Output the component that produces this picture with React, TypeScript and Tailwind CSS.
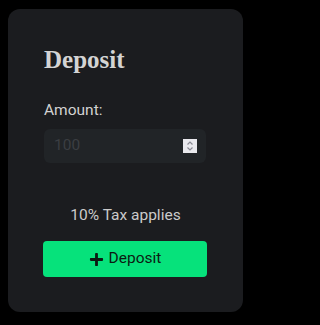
import { FaPlus } from "react-icons/fa";

export default function App() {
  return (
    <div className="min-h-screen w-full bg-black pl-2 pt-[9px]" style={{ fontFamily: "Roboto, 'Noto Sans', sans-serif" }}>
      <div className="w-[235px] h-[303px] rounded-xl bg-[#1b1c1f] px-9 pt-[35px]">
        <h2
          className="text-[25px] leading-8 font-bold text-[#d4d4d4] mb-6"
          style={{ fontFamily: "'Liberation Serif', serif" }}
        >
          Deposit
        </h2>
        <label className="block text-[15.5px] leading-5 text-[#d2d2d2] mb-[9px]">Amount:</label>
        <div className="flex items-center h-[34px] w-[162px] rounded-md bg-[#212427] pl-2.5 pr-[9px]">
          <input
            type="text"
            placeholder="100"
            className="flex-1 min-w-0 bg-transparent text-[15.5px] text-[#d2d2d2] placeholder:text-[#3b3e42] outline-none"
          />
          <div className="flex flex-col items-center justify-center w-[14px] h-[14px] bg-[#e9e9ed]">
            <svg width="8" height="12" viewBox="0 0 8 12" fill="none" stroke="#8a8a93" strokeWidth="1.2">
              <polyline points="1.5,4.5 4,2 6.5,4.5" />
              <polyline points="1.5,7.5 4,10 6.5,7.5" />
            </svg>
          </div>
        </div>
        <p className="mt-[42px] text-center text-[15.5px] leading-5 text-[#cbcbcb]">10% Tax applies</p>
        <button className="mt-4 -ml-px flex items-center justify-center gap-[5px] w-[164px] h-9 rounded bg-[#06e27b] text-[15.5px] text-[#0c1a12]">
          <FaPlus className="w-[15px] h-[15px]" />
          Deposit
        </button>
      </div>
    </div>
  );
}
